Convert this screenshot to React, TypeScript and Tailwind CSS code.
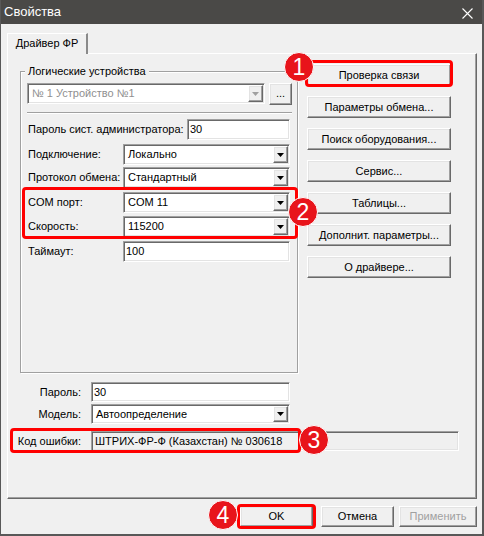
import React from "react";

const raised =
  "bg-[#f0f0f0] border border-t-white border-l-white border-r-[#696969] border-b-[#696969] shadow-[inset_-1px_-1px_0_#a0a0a0,inset_1px_1px_0_#e3e3e3]";
const sunken =
  "border border-t-[#a0a0a0] border-l-[#a0a0a0] border-r-white border-b-white shadow-[inset_1px_1px_0_#696969,inset_-1px_-1px_0_#e3e3e3]";

function Arrow({ disabled }: { disabled?: boolean }) {
  return (
    <div className={`${raised} w-[15px] h-full flex items-center justify-center`}>
      <svg width="7" height="4" viewBox="0 0 7 4">
        <polygon points="0,0 7,0 3.5,4" fill={disabled ? "#a0a0a0" : "#000"} />
      </svg>
    </div>
  );
}

function Combo({ value, className, disabled }: { value: string; className: string; disabled?: boolean }) {
  return (
    <div className={`${sunken} bg-white p-px flex items-stretch ${className}`}>
      <span className={`flex-1 pl-[3px] flex items-center whitespace-nowrap overflow-hidden ${disabled ? "text-[#8f8f8f]" : "text-black"}`}>
        {value}
      </span>
      <Arrow disabled={disabled} />
    </div>
  );
}

function Edit({ value, className }: { value: string; className: string }) {
  return (
    <div className={`${sunken} bg-white pl-[2px] flex items-center whitespace-nowrap ${className}`}>{value}</div>
  );
}

function Btn({ children, className, disabled }: { children: React.ReactNode; className: string; disabled?: boolean }) {
  return (
    <div
      className={`${raised} flex items-center justify-center whitespace-nowrap ${disabled ? "text-[#a0a0a0]" : "text-black"} ${className}`}
    >
      {children}
    </div>
  );
}

function Row({ label, labelW, children, className }: { label: string; labelW: string; children: React.ReactNode; className: string }) {
  return (
    <div className={`flex items-center h-[21px] ${className}`}>
      <span className={`pl-px whitespace-nowrap ${labelW}`}>{label}</span>
      {children}
    </div>
  );
}

function Badge({ n, className }: { n: string; className: string }) {
  return (
    <div
      className={`absolute w-[30px] h-[30px] rounded-full bg-[#e8141b] border-[1.5px] border-white flex items-center justify-center text-white text-[23px] leading-none font-['Liberation_Sans',sans-serif] ${className}`}
    >
      {n}
    </div>
  );
}

export default function App() {
  return (
    <div className="relative w-[484px] h-[536px] bg-[#f0f0f0] border-l border-r-2 border-b-2 border-[#585858] flex flex-col font-['Liberation_Sans',Arial,sans-serif] text-[11px] text-black overflow-hidden">
      {/* Title bar */}
      <div className="h-[24px] shrink-0 bg-[#4a4947] flex items-start justify-between pl-[3px] pr-[9px]">
        <span className="text-white text-[13px] pt-[5px] leading-none">Свойства</span>
        <svg width="11" height="11" viewBox="0 0 11 11" className="mt-[8px]">
          <path d="M0.5 0.5 L10.5 10.5 M10.5 0.5 L0.5 10.5" stroke="#fff" strokeWidth="1.1" />
        </svg>
      </div>

      {/* Body */}
      <div className="flex-1 pl-[6px] pt-[9px] flex flex-col">
        {/* Tab */}
        <div className="relative z-10 -mb-px w-[81px] h-[21px] bg-[#f0f0f0] border-t border-l border-t-white border-l-white border-r-2 border-r-[#8a8a8a] flex items-center justify-center pb-[2px]">
          Драйвер ФР
        </div>

        {/* Panel */}
        <div className="w-[470px] h-[446px] border border-t-white border-l-white border-r-[#696969] border-b-[#696969] shadow-[inset_-1px_-1px_0_#a0a0a0] flex flex-col">
          <div className="flex items-start">
            {/* Group box */}
            <div className="relative ml-[12px] mt-[17px] w-[278px] h-[302px] border border-[#a0a0a0] shadow-[1px_1px_0_white,inset_1px_1px_0_white] pl-[6px] pt-[11px]">
              <span className="absolute -top-[8px] left-[4px] px-[3px] bg-[#f0f0f0] leading-[14px] whitespace-nowrap">
                Логические устройства
              </span>
              <div className="flex items-start gap-[4px]">
                <Combo value="№ 1 Устройство №1" className="w-[238px] h-[21px]" disabled />
                <Btn className="w-[23px] h-[22px] items-end pb-[3px]">...</Btn>
              </div>
              <div className="mt-[7px] w-[265px] h-[2px] border-t border-t-[#a0a0a0] border-b border-b-white" />
              <Row label="Пароль сист. администратора:" labelW="w-[160px]" className="mt-[5px]">
                <Edit value="30" className="w-[103px] h-full" />
              </Row>
              <Row label="Подключение:" labelW="w-[96px]" className="mt-[4px]">
                <Combo value="Локально" className="w-[167px] h-full" />
              </Row>
              <Row label="Протокол обмена:" labelW="w-[96px]" className="mt-[2px]">
                <Combo value="Стандартный" className="w-[167px] h-full" />
              </Row>
              <Row label="COM порт:" labelW="w-[96px]" className="mt-[4px]">
                <Combo value="COM 11" className="w-[167px] h-full" />
              </Row>
              <Row label="Скорость:" labelW="w-[96px]" className="mt-[3px]">
                <Combo value="115200" className="w-[167px] h-full" />
              </Row>
              <Row label="Таймаут:" labelW="w-[96px]" className="mt-[4px]">
                <Edit value="100" className="w-[167px] h-full" />
              </Row>
            </div>

            {/* Right buttons */}
            <div className="ml-[9px] mt-[10px] flex flex-col gap-[10px]">
              <Btn className="w-[144px] h-[22px]">Проверка связи</Btn>
              <Btn className="w-[144px] h-[22px]">Параметры обмена...</Btn>
              <Btn className="w-[144px] h-[22px]">Поиск оборудования...</Btn>
              <Btn className="w-[144px] h-[22px]">Сервис...</Btn>
              <Btn className="w-[144px] h-[22px]">Таблицы...</Btn>
              <Btn className="w-[144px] h-[22px]">Дополнит. параметры...</Btn>
              <Btn className="w-[144px] h-[22px]">О драйвере...</Btn>
            </div>
          </div>

          {/* Bottom fields */}
          <div className="flex items-center h-[20px] mt-[9px]">
            <span className="w-[73px] text-right">Пароль:</span>
            <Edit value="30" className="ml-[10px] w-[199px] h-full" />
          </div>
          <div className="flex items-center h-[20px] mt-[2px]">
            <span className="w-[73px] text-right">Модель:</span>
            <Combo value="Автоопределение" className="ml-[10px] w-[199px] h-full" />
          </div>
          <div className="flex items-center h-[20px] mt-[7px]">
            <span className="w-[73px] text-right whitespace-nowrap">Код ошибки:</span>
            <div className={`${sunken} ml-[10px] w-[368px] h-full bg-[#f0f0f0] pl-[3px] flex items-center whitespace-nowrap`}>
              ШТРИХ-ФР-Ф (Казахстан) № 030618
            </div>
          </div>
        </div>

        {/* Dialog buttons */}
        <div className="w-[470px] mt-[7px] flex justify-end">
          <Btn className="w-[73px] h-[21px]">OK</Btn>
          <Btn className="ml-[8px] w-[73px] h-[21px]">Отмена</Btn>
          <Btn className="ml-[5px] w-[78px] h-[21px]" disabled>
            Применить
          </Btn>
        </div>
      </div>

      {/* Annotations */}
      <div className="absolute left-[304px] top-[60px] w-[148px] h-[27px] border-[3px] border-[#ff0000] rounded-[4px]" />
      <div className="absolute left-[21px] top-[187px] w-[276px] h-[52px] border-[3px] border-[#ff0000] rounded-[4px]" />
      <div className="absolute left-[9px] top-[428px] w-[291px] h-[25px] border-[3px] border-[#ff0000] rounded-[4px]" />
      <div className="absolute left-[236px] top-[504px] w-[79px] h-[25px] border-[3px] border-[#ff0000] rounded-[4px]" />
      <Badge n="1" className="left-[283px] top-[52px]" />
      <Badge n="2" className="left-[287px] top-[197px]" />
      <Badge n="3" className="left-[298px] top-[425px]" />
      <Badge n="4" className="left-[207px] top-[500px]" />
    </div>
  );
}
